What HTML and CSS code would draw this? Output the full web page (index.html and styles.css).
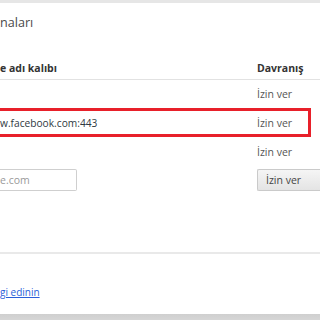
FILE: index.html
```html
<!DOCTYPE html>
<html lang="tr">
<head>
<meta charset="utf-8">
<title>İstisnalar</title>
<link rel="stylesheet" href="styles.css">
</head>
<body>
<div class="topbar"></div>
<main class="panel">
  <h1 class="title">naları</h1>
  <div class="table">
    <div class="row head">
      <span class="pattern">e adı kalıbı</span>
      <span class="act">Davranış</span>
    </div>
    <div class="row item">
      <span class="pattern"></span>
      <span class="act">İzin ver</span>
    </div>
    <div class="row item sel">
      <span class="pattern host">w.facebook.com:443</span>
      <span class="act">İzin ver</span>
    </div>
    <div class="row item">
      <span class="pattern"></span>
      <span class="act">İzin ver</span>
    </div>
    <div class="row add">
      <input class="field" type="text" placeholder="e.com">
      <button class="select" type="button">İzin ver</button>
    </div>
  </div>
  <div class="sep"></div>
  <a class="more" href="#">gi edinin</a>
</main>
<div class="bottombar"></div>
</body>
</html>
```
FILE: styles.css
```css
html, body {
  margin: 0;
  padding: 0;
  height: 320px;
  overflow: hidden;
  background: #ffffff;
}
body {
  font-family: "Open Sans", "Noto Sans", sans-serif;
  font-size: 10.5px;
  color: #333;
}
.topbar {
  height: 3px;
  background: #e6e6e6;
}
.panel {
  display: flex;
  flex-direction: column;
}
.title {
  margin: 12px 0 25px 0;
  font-size: 12.6px;
  line-height: 16px;
  font-weight: 400;
  color: #4a4a4a;
}
.table {
  display: flex;
  flex-direction: column;
}
.row {
  display: grid;
  grid-template-columns: 257px 1fr;
  align-items: center;
}
.head {
  height: 23px;
  border-bottom: 1px solid #e2e2e2;
  font-weight: 700;
  color: #333;
}
.item {
  height: 28px;
}
.item .act {
  color: #555;
}
.sel {
  height: 23px;
  width: 308px;
  border: 3px solid #e8202a;
  border-left: 0;
}
.host {
  color: #303942;
  font-size: 10.2px;
}
.sel + .row {
  height: 29px;
}
.add {
  height: 28px;
}
.field {
  box-sizing: border-box;
  width: 77px;
  height: 22px;
  padding: 0;
  border: 1px solid #cfcfcf;
  border-left: 0;
  border-radius: 0 2px 2px 0;
  font: inherit;
  color: #333;
  background: #fff;
}
.field::placeholder {
  color: #9a9a9a;
}
.select {
  box-sizing: border-box;
  width: 63px;
  height: 22px;
  padding: 0 0 0 8px;
  text-align: left;
  border: 1px solid #cacaca;
  border-right: 0;
  border-radius: 2px 0 0 2px;
  background: linear-gradient(#f5f5f5, #e4e4e4);
  font: inherit;
  color: #444;
}
.sep {
  margin-top: 58px;
  height: 2px;
  background: #e9e9e9;
}
.more {
  margin-top: 31px;
  font-size: 10px;
  line-height: 14px;
  color: #2b5fd9;
  text-decoration: underline;
  align-self: flex-start;
}
.bottombar {
  margin-top: 15px;
  height: 10px;
  background: linear-gradient(#cfcfcf, #dadada);
}
```
